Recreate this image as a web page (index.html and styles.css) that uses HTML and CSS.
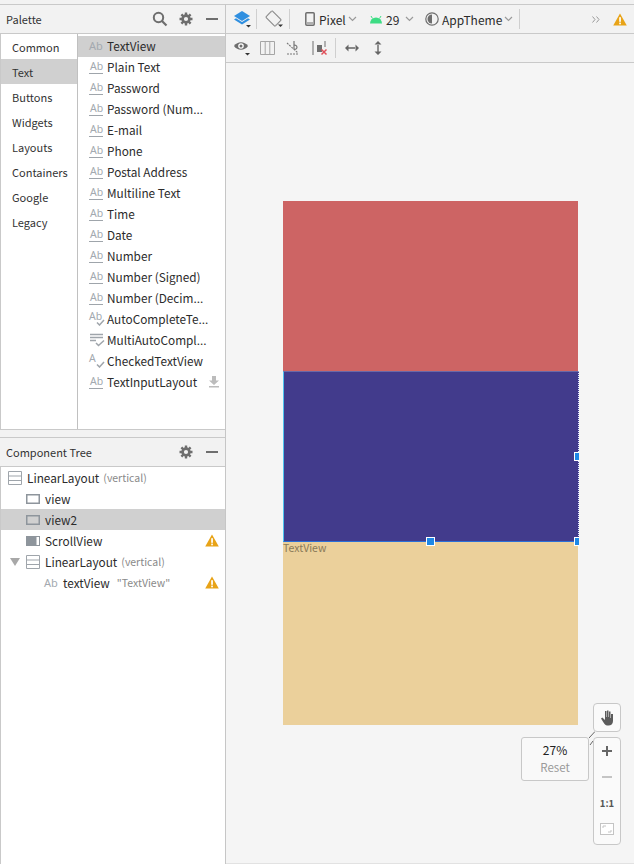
FILE: index.html
```html
<!DOCTYPE html>
<html lang="en">
<head>
<meta charset="utf-8">
<title>Layout Editor</title>
<link rel="stylesheet" href="styles.css">
</head>
<body>
<svg class="defs" width="0" height="0">
  <symbol id="warn" viewBox="0 0 14 13"><path d="M7 0.500 L13.800 12.500 H0.200Z" fill="#e8a317"/><rect x="6.200" y="4.200" width="1.700" height="4.600" fill="#fff"/><rect x="6.200" y="9.600" width="1.700" height="1.700" fill="#fff"/></symbol>
  <symbol id="gear" viewBox="0 0 14 14"><circle cx="7" cy="7" r="3.400" fill="none" stroke="#6e6e6e" stroke-width="2.600"/><path d="M7 .5v2.600M7 10.900v2.600M.5 7h2.600M10.900 7h2.600M2.400 2.400l1.900 1.900M9.700 9.700l1.900 1.900M2.400 11.600l1.900-1.900M9.700 4.300l1.900-1.900" stroke="#6e6e6e" stroke-width="2.400"/></symbol>
  <symbol id="chev" viewBox="0 0 9 6"><path d="M1 1 L4.500 4.500 L8 1" fill="none" stroke="#9a9a9a" stroke-width="1.200"/></symbol>
  <symbol id="layout" viewBox="0 0 14 14"><path d="M.5.500h13v13H.5zM.5 5h13M.5 9.500h13" fill="none" stroke="#9fa5ab"/></symbol>
  <symbol id="box" viewBox="0 0 14 10"><rect x=".75" y=".75" width="12.500" height="8.500" fill="none" stroke="#8e959c" stroke-width="1.500"/></symbol>
</svg>

<div class="app">
  <aside class="side">
    <section class="palette">
      <header class="head">
        <span class="head-title">Palette</span>
        <svg class="ic search" viewBox="0 0 16 16"><circle cx="6.500" cy="6.500" r="4.700" fill="none" stroke="#6e6e6e" stroke-width="2"/><path d="M10 10l4.500 4.500" stroke="#6e6e6e" stroke-width="2.200"/></svg>
        <svg class="ic gear"><use href="#gear"/></svg>
        <span class="minus"></span>
      </header>
      <div class="palette-body">
        <nav class="cats">
          <div class="cat">Common</div>
          <div class="cat cat-on">Text</div>
          <div class="cat">Buttons</div>
          <div class="cat">Widgets</div>
          <div class="cat">Layouts</div>
          <div class="cat">Containers</div>
          <div class="cat">Google</div>
          <div class="cat">Legacy</div>
        </nav>
        <ul class="items">
          <li class="item item-on"><span class="abplain">Ab</span>TextView</li>
          <li class="item"><span class="abu">Ab</span>Plain Text</li>
          <li class="item"><span class="abu">Ab</span>Password</li>
          <li class="item"><span class="abu">Ab</span>Password (Num...</li>
          <li class="item"><span class="abu">Ab</span>E-mail</li>
          <li class="item"><span class="abu">Ab</span>Phone</li>
          <li class="item"><span class="abu">Ab</span>Postal Address</li>
          <li class="item"><span class="abu">Ab</span>Multiline Text</li>
          <li class="item"><span class="abu">Ab</span>Time</li>
          <li class="item"><span class="abu">Ab</span>Date</li>
          <li class="item"><span class="abu">Ab</span>Number</li>
          <li class="item"><span class="abu">Ab</span>Number (Signed)</li>
          <li class="item"><span class="abu">Ab</span>Number (Decim...</li>
          <li class="item"><span class="abck">Ab<svg class="ck" viewBox="0 0 9 7"><path d="M1 3.500l2.500 2.500L8 1" fill="none" stroke="#9fa5ab" stroke-width="1.500"/></svg></span>AutoCompleteTe...</li>
          <li class="item"><svg class="abic" viewBox="0 0 16 14"><path d="M1 1.500h13M1 4.500h13M1 7.500h6" stroke="#9fa5ab" stroke-width="1.400"/><path d="M7 10l2.500 2.500L15 7.500" fill="none" stroke="#9fa5ab" stroke-width="1.500"/></svg>MultiAutoCompl...</li>
          <li class="item"><span class="abck">A<svg class="ck" viewBox="0 0 9 7"><path d="M1 3.500l2.500 2.500L8 1" fill="none" stroke="#9fa5ab" stroke-width="1.500"/></svg></span>CheckedTextView</li>
          <li class="item"><span class="abu">Ab</span>TextInputLayout
            <svg class="dl" viewBox="0 0 12 12"><path d="M4 0h4v4.500h3L6 9 1 4.500h3zM1 10h10v1.500H1z" fill="#bcbcbc"/></svg></li>
        </ul>
      </div>
    </section>
    <div class="split"></div>
    <section class="tree">
      <header class="head">
        <span class="head-title">Component Tree</span>
        <svg class="ic gear"><use href="#gear"/></svg>
        <span class="minus"></span>
      </header>
      <ul class="nodes">
        <li class="node lv0"><svg class="ti14"><use href="#layout"/></svg>LinearLayout<span class="dim">(vertical)</span></li>
        <li class="node lv1"><svg class="ti-box"><use href="#box"/></svg>view</li>
        <li class="node lv1 node-on"><svg class="ti-box"><use href="#box"/></svg>view2</li>
        <li class="node lv1"><svg class="ti-box" viewBox="0 0 14 10"><rect width="14" height="10" fill="#8e959c"/><rect x="10.500" y="1" width="2.500" height="8" fill="#fff"/></svg>ScrollView<svg class="warn"><use href="#warn"/></svg></li>
        <li class="node lv1b"><span class="tri"></span><svg class="ti14"><use href="#layout"/></svg>LinearLayout<span class="dim">(vertical)</span></li>
        <li class="node lv2"><span class="abplain abtree">Ab</span>textView<span class="dim dim2">"TextView"</span><svg class="warn"><use href="#warn"/></svg></li>
      </ul>
    </section>
  </aside>

  <main class="editor">
    <div class="bar bar1">
      <svg class="tb layers" viewBox="0 0 18 18"><path d="M9 1l8 5-8 5-8-5z" fill="#2f8fe0"/><path d="M1 9.500l2-1.200 6 3.700 6-3.700 2 1.200-8 5z" fill="#2f8fe0"/><path d="M13 15h5l-2.500 2.500z" fill="#333"/></svg>
      <span class="sep sep1"></span>
      <svg class="tb rotate" viewBox="0 0 18 18"><g transform="rotate(-45 8.500 8.500)"><rect x="4" y="2" width="9" height="13" rx="1" fill="none" stroke="#8a8a8a" stroke-width="1.100"/></g><path d="M3 4.500A8 8 0 0 1 8 1M14 12.500A8 8 0 0 1 9 16" fill="none" stroke="#a8a8a8"/><path d="M13 14.500h5l-2.500 2.500z" fill="#333"/></svg>
      <span class="sep sep2"></span>
      <svg class="phone" viewBox="0 0 10 14"><rect x=".8" y=".8" width="8.400" height="12.400" rx="1" fill="none" stroke="#6e6e6e" stroke-width="1.500"/><path d="M2 11h6" stroke="#6e6e6e"/></svg>
      <span class="tl tl-pixel">Pixel</span>
      <svg class="chev chev-pixel"><use href="#chev"/></svg>
      <svg class="android" viewBox="0 0 14 9"><path d="M1 8.500a6 6 0 0 1 12 0z" fill="#3ddc84"/><path d="M3.500 3.500L2 1M10.500 3.500L12 1" stroke="#3ddc84"/></svg>
      <span class="tl tl-api">29</span>
      <svg class="chev chev-api"><use href="#chev"/></svg>
      <svg class="theme" viewBox="0 0 14 14"><circle cx="7" cy="7" r="6.200" fill="none" stroke="#6e6e6e" stroke-width="1.200"/><path d="M7 2.500a4.500 4.500 0 0 0 0 9z" fill="#6e6e6e"/></svg>
      <span class="tl tl-theme">AppTheme</span>
      <svg class="chev chev-theme"><use href="#chev"/></svg>
      <span class="sep sep3"></span>
      <svg class="more" viewBox="0 0 8 7"><path d="M.5.500L3 3.500.5 6.500M4.500.500L7 3.500 4.500 6.500" fill="none" stroke="#9a9a9a"/></svg>
      <svg class="warn warn-top"><use href="#warn"/></svg>
    </div>
    <div class="bar bar2">
      <svg class="tb2 eye" viewBox="0 0 18 16"><path d="M1 6c3.500-5 10.500-5 14 0-3.500 5-10.500 5-14 0z" fill="#6e6e6e"/><circle cx="8" cy="6" r="2.800" fill="#fff"/><circle cx="8" cy="6" r="1.500" fill="#6e6e6e"/><path d="M12 13h5l-2.500 2.500z" fill="#333"/></svg>
      <svg class="tb2 cols" viewBox="0 0 15 14"><path d="M.5.500h14v13H.5zM5.200.500v13M9.800.500v13" fill="none" stroke="#a5a5a5"/></svg>
      <svg class="tb2 noconst" viewBox="0 0 16 16"><path d="M9 1v8M9 5.500a2 2 0 1 1 0 3.500" fill="none" stroke="#777" stroke-width="1.200"/><path d="M2 14h11" stroke="#777" stroke-width="1.100" stroke-dasharray="2 1"/><path d="M2 3l11 10" stroke="#777" stroke-width="1.100" stroke-dasharray="2 1"/></svg>
      <svg class="tb2 clear" viewBox="0 0 16 16"><path d="M1 1v14" stroke="#6e6e6e"/><rect x="5" y="5" width="5" height="7" fill="#6e6e6e"/><path d="M13 1v6" stroke="#6e6e6e"/><path d="M9.500 9.500l5 5M14.500 9.500l-5 5" stroke="#e0505a" stroke-width="1.500"/></svg>
      <span class="sep sep4"></span>
      <svg class="tb2 hz" viewBox="0 0 14 8"><path d="M0 4l3.500-3.500v7zM14 4l-3.500-3.500v7zM3 3.300h8v1.400H3z" fill="#666"/></svg>
      <svg class="tb2 vt" viewBox="0 0 8 14"><path d="M4 0L.5 3.500h7zM4 14L.5 10.500h7zM3.300 3h1.400v8H3.300z" fill="#666"/></svg>
    </div>
    <div class="canvas">
      <div class="device">
        <div class="v v-red"></div>
        <div class="v v-blue">
          <span class="hd hd-r"></span><span class="hd hd-b"></span><span class="hd hd-br"></span>
        </div>
        <div class="v v-tan"><span class="tv">TextView</span></div>
      </div>
      <div class="zoomtool">
        <div class="tip"><span class="pct">27%</span><span class="reset">Reset</span></div>
        <svg class="conn" viewBox="0 0 6 15"><path d="M0 7L6 .5M1 14l3-4" stroke="#666" fill="none"/></svg>
        <div class="zcol">
          <button class="zb zhand"><svg class="hand" viewBox="0 0 14 16"><path d="M5 1h1.500v6H7V.5h1.500V7H9V1.500h1.500V8H11V4h2v7c0 3-2 4.500-4.500 4.500S5 15 3.500 12.500L1 8.500l1.300-1L5 10z" fill="#5c5c5c"/></svg></button>
          <div class="zgroup">
            <div class="zi zplus"></div>
            <div class="zi zminus"></div>
            <div class="zi z11">1:1</div>
            <div class="zi zfit"><svg class="fit" viewBox="0 0 14 12"><rect x=".5" y=".5" width="13" height="11" fill="#fff" stroke="#c4c4c4"/><path d="M3 5V3h3M11 7v2H8" fill="none" stroke="#c4c4c4"/></svg></div>
          </div>
        </div>
      </div>
    </div>
  </main>
</div>
</body>
</html>
```
FILE: styles.css
```css
* { box-sizing: border-box; }
html, body { margin: 0; height: 100%; }
body { font-family: "Noto Sans CJK KR", "Noto Sans", sans-serif; font-size: 11.8px; color: #222; background: #f2f2f2; overflow: hidden; }
.defs { position: absolute; }
ul { list-style: none; margin: 0; padding: 0; }
.app { display: flex; height: 864px; padding-top: 4px; }

.side { width: 226px; flex: none; display: flex; flex-direction: column; border-right: 1px solid #c6c6c6; background: #fff; }
.head { height: 30px; flex: none; display: flex; align-items: center; padding-left: 6px; background: #f2f2f2; border-top: 1px solid #c9c9c9; border-bottom: 1px solid #c9c9c9; }
.head-title { flex: 1; font-size: 11px; color: #333; }
.ic { display: block; }
.search { width: 16px; height: 16px; margin-right: 11px; }
.gear { width: 14px; height: 14px; margin-right: 13px; }
.minus { width: 12px; height: 2px; background: #6e6e6e; margin-right: 7px; }

.palette-body { height: 395px; display: flex; border-left: 1px solid #c9c9c9; }
.cats { width: 77px; flex: none; border-right: 1px solid #c0c0c0; }
.cat { height: 25px; line-height: 27px; padding-left: 11px; font-size: 11px; color: #333; }
.cat-on { background: #d0d0d0; }
.items { flex: 1; padding-top: 2px; min-width: 0; }
.item { height: 21px; display: flex; align-items: center; padding: 0 0 2px 11px; white-space: nowrap; color: #2b2b2b; }
.item-on { background: #d0d0d0; }
.abu { flex: none; width: 14px; height: 13px; margin: 2px 4px 0 0; padding-left: 1px; font: 400 10.5px/11px "Noto Sans", sans-serif; color: #a3a9af; border-bottom: 1.5px solid #9fa5ab; }
.abck { flex: none; position: relative; width: 14px; height: 15px; margin-right: 4px; font: 400 10.5px/11px "Noto Sans", sans-serif; color: #a3a9af; }
.ck { position: absolute; right: -2px; bottom: 0; width: 9px; height: 7px; }
.abic { width: 16px; height: 14px; margin-right: 2px; flex: none; }
.abplain { width: 18px; flex: none; font-family: "Noto Sans", sans-serif; font-size: 11px; color: #a3a9af; }
.dl { width: 12px; height: 12px; margin-left: auto; margin-right: 5px; }

.split { height: 8px; flex: none; background: #f2f2f2; border-top: 1px solid #c9c9c9; }
.tree { flex: 1; display: flex; flex-direction: column; }
.nodes { flex: 1; border-left: 1px solid #c9c9c9; }
.node { height: 21px; display: flex; align-items: center; white-space: nowrap; color: #2b2b2b; position: relative; }
.node-on { background: #d0d0d0; }
.lv0 { padding-left: 7px; }
.lv1 { padding-left: 25px; }
.lv1b { padding-left: 9px; }
.lv2 { padding-left: 43px; }
.ti14 { width: 14px; height: 14px; margin-right: 5px; flex: none; }
.ti-box { width: 14px; height: 10px; margin-right: 5px; flex: none; }
.tri { width: 0; height: 0; border-left: 5px solid transparent; border-right: 5px solid transparent; border-top: 8px solid #a8a8a8; margin-right: 6px; }
.dim { color: #8a8a8a; font-size: 10.5px; margin-left: 4px; }
.dim2 { margin-left: 7px; }
.abtree { width: 19px; }
.warn { width: 14px; height: 13px; flex: none; }
.node .warn { position: absolute; right: 6px; top: 4px; }

.editor { flex: 1; min-width: 0; display: flex; flex-direction: column; }
.bar { height: 29px; flex: none; display: flex; align-items: center; background: #f2f2f2; border-top: 1px solid #c9c9c9; }
.bar2 { height: 30px; border-bottom: 1px solid #c9c9c9; }
.sep { width: 1px; height: 20px; background: #cfcfcf; flex: none; }
.tb { width: 18px; height: 18px; flex: none; }
.layers { margin-left: 7px; }
.sep1 { margin-left: 5px; }
.rotate { margin-left: 8px; }
.sep2 { margin-left: 6px; }
.phone { width: 10px; height: 14px; margin-left: 15px; flex: none; }
.tl { color: #2b2b2b; font-size: 12px; }
.tl-pixel { margin-left: 4px; width: 26px; }
.chev { width: 9px; height: 6px; flex: none; }
.chev-pixel { margin-left: 3px; }
.android { width: 14px; height: 9px; margin-left: 12px; flex: none; }
.tl-api { margin-left: 3px; width: 15px; }
.chev-api { margin-left: 4px; }
.theme { width: 14px; height: 14px; margin-left: 11px; flex: none; }
.tl-theme { margin-left: 3px; width: 57px; }
.chev-theme { margin-left: 5px; }
.sep3 { margin-left: 6px; }
.more { width: 8px; height: 7px; margin-left: 72px; flex: none; }
.warn-top { margin-left: 13px; }
.tb2 { flex: none; }
.eye { width: 18px; height: 16px; margin-left: 7px; }
.cols { width: 15px; height: 14px; margin-left: 9px; }
.noconst { width: 16px; height: 16px; margin-left: 10px; }
.clear { width: 16px; height: 16px; margin-left: 11px; }
.sep4 { margin-left: 7px; }
.hz { width: 14px; height: 8px; margin-left: 9px; }
.vt { width: 8px; height: 14px; margin-left: 15px; }

.canvas { flex: 1; position: relative; background: #f5f5f5; border-bottom: 1px solid #e2e2e2; padding: 138px 0 0 57px; }
.device { width: 295px; height: 524px; display: flex; flex-direction: column; }
.v { width: 295px; position: relative; flex: none; }
.v-red { height: 170px; background: #cd6464; }
.v-blue { width: 296px; height: 171px; z-index: 1; background: #423b8c; border-top: 1px solid #6a68a8; border-left: 1px solid #4fc3f0; border-bottom: 1px solid #2a6fd8; border-right: 1px dotted #dfe8ff; }
.v-tan { height: 183px; background: #ebd09b; }
.tv { display: block; font-size: 10.5px; line-height: 12px; color: #8a7a58; }
.hd { position: absolute; height: 9px; background: #1e88e5; border: 1px solid #fff; }
.hd-b { width: 9px; left: 142px; bottom: -5px; }
.hd-r { width: 5px; right: -1px; top: 80px; border-right: none; }
.hd-br { width: 5px; right: -1px; bottom: -5px; border-right: none; }

.zoomtool { position: absolute; left: 295px; top: 640px; display: flex; align-items: flex-start; }
.tip { width: 68px; height: 44px; margin-top: 34px; display: flex; flex-direction: column; align-items: center; background: #f9f9f9; border: 1px solid #c8c8c8; border-radius: 3px; padding-top: 3px; }
.pct { font-size: 12px; line-height: 17px; color: #222; }
.reset { font-size: 11.5px; line-height: 19px; color: #999; }
.conn { width: 6px; height: 15px; margin-top: 28px; margin-right: -2px; flex: none; }
.zcol { display: flex; flex-direction: column; gap: 5px; width: 28px; }
.zb { width: 28px; height: 29px; padding: 0; background: #fafafa; border: 1px solid #c8c8c8; border-radius: 4px; display: flex; align-items: center; justify-content: center; }
.hand { width: 14px; height: 16px; }
.zgroup { height: 108px; background: #fafafa; border: 1px solid #c8c8c8; border-radius: 4px; display: flex; flex-direction: column; }
.zi { height: 26px; display: flex; align-items: center; justify-content: center; position: relative; }
.zplus::before { content: ""; width: 10px; height: 2px; background: #666; }
.zplus::after { content: ""; position: absolute; width: 2px; height: 10px; background: #666; }
.zminus::before { content: ""; width: 10px; height: 2px; background: #c4c4c4; }
.z11 { font-size: 9.5px; font-weight: 700; color: #555; }
.fit { width: 14px; height: 12px; }
```
